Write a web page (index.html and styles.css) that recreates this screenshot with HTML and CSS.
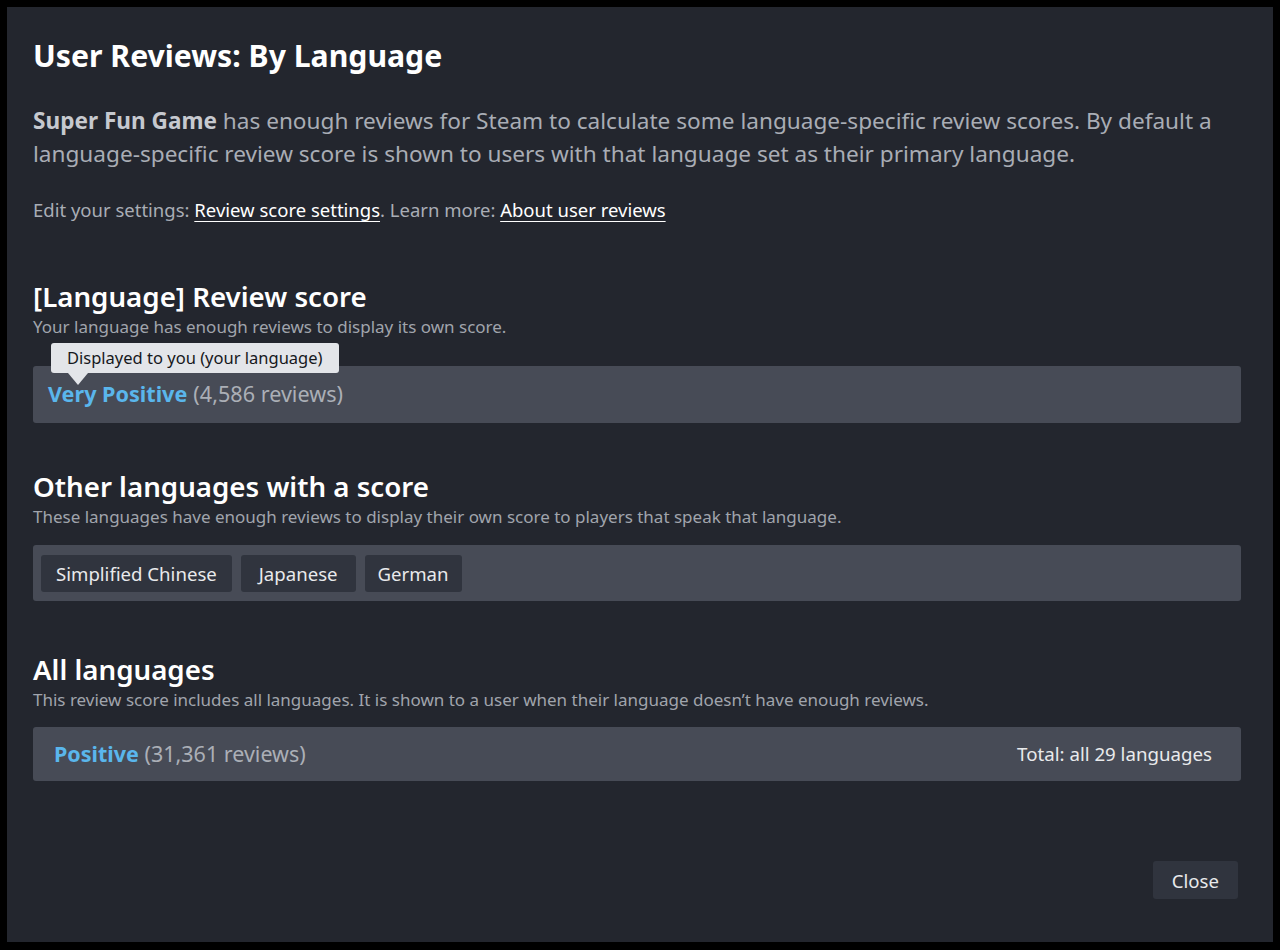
FILE: index.html
```html
<!DOCTYPE html>
<html>
<head>
<meta charset="utf-8">
<link rel="stylesheet" href="styles.css">
</head>
<body>
<div class="dialog">
  <h1 class="title">User Reviews: By Language</h1>
  <p class="intro"><b>Super Fun Game</b> has enough reviews for Steam to calculate some language-specific review scores. By default a language-specific review score is shown to users with that language set as their primary language.</p>
  <p class="settings">Edit your settings: <a href="#">Review score settings</a>. Learn more: <a href="#">About user reviews</a></p>

  <section class="sec sec-1">
    <h2 class="sec-title">[Language] Review score</h2>
    <p class="sec-sub">Your language has enough reviews to display its own score.</p>
    <div class="box box-score">
      <div class="tooltip">Displayed to you (your language)</div>
      <span class="score">Very Positive</span> <span class="count">(4,586 reviews)</span>
    </div>
  </section>

  <section class="sec sec-2">
    <h2 class="sec-title">Other languages with a score</h2>
    <p class="sec-sub">These languages have enough reviews to display their own score to players that speak that language.</p>
    <div class="box box-chips">
      <span class="chip">Simplified Chinese</span>
      <span class="chip chip-wide">Japanese</span>
      <span class="chip chip-narrow">German</span>
    </div>
  </section>

  <section class="sec sec-3">
    <h2 class="sec-title">All languages</h2>
    <p class="sec-sub">This review score includes all languages. It is shown to a user when their language doesn’t have enough reviews.</p>
    <div class="box box-all">
      <div><span class="score">Positive</span> <span class="count">(31,361 reviews)</span></div>
      <div class="total">Total: all 29 languages</div>
    </div>
  </section>

  <div class="footer">
    <button class="close">Close</button>
  </div>
</div>
</body>
</html>
```

FILE: styles.css
```css
* { box-sizing: border-box; }
html, body { margin: 0; padding: 0; }
body {
  background: #000;
  width: 1280px;
  height: 950px;
  padding: 7px;
  font-family: "Noto Sans", "Open Sans", sans-serif;
}
.dialog {
  width: 1266px;
  height: 935px;
  background: #23262e;
  padding: 29px 32px 0 26px;
  display: flex;
  flex-direction: column;
}
.title {
  margin: 0;
  font-size: 30.2px;
  line-height: 40px;
  font-weight: 700;
  color: #ffffff;
}
.intro {
  margin: 28px 0 0;
  font-size: 22.6px;
  line-height: 33px;
  color: #a9adb5;
}
.intro b { color: #c6c9cf; font-weight: 700; }
.settings {
  margin: 28px 0 0;
  font-size: 18.5px;
  line-height: 24px;
  color: #a9adb5;
}
.settings a {
  color: #ffffff;
  text-decoration: underline;
  text-underline-offset: 4px;
}
.sec-title {
  margin: 0;
  font-size: 27.7px;
  line-height: 36px;
  font-weight: 600;
  color: #ffffff;
}
.sec-sub {
  margin: 2px 0 0;
  font-size: 17px;
  line-height: 22px;
  color: #a0a4ac;
}
.sec-1 { margin-top: 56px; }
.sec-2 { margin-top: 45px; }
.sec-3 { margin-top: 50px; }
.box {
  background: #474b56;
  border-radius: 3px;
}
.box-score {
  position: relative;
  height: 57px;
  margin-top: 28px;
  padding: 0 15px 3px;
  display: flex;
  align-items: center;
  gap: 6px;
  font-size: 21.6px;
}
.score { color: #5ab6ec; font-weight: 700; }
.count { color: #abafb6; }
.tooltip {
  position: absolute;
  left: 18px;
  top: -23px;
  background: #e3e5e9;
  color: #16181c;
  font-size: 16.5px;
  line-height: 30px;
  padding: 0 16px;
  border-radius: 3px;
}
.tooltip::after {
  content: "";
  position: absolute;
  left: 17px;
  bottom: -12px;
  border-left: 10px solid transparent;
  border-right: 10px solid transparent;
  border-top: 12px solid #e3e5e9;
}
.box-chips {
  margin-top: 17px;
  height: 56px;
  padding: 0 8px;
  display: flex;
  align-items: center;
  gap: 9px;
}
.chip {
  background: #30343e;
  color: #e9eaec;
  font-size: 18.6px;
  height: 37px;
  line-height: 37px;
  padding: 0 15px;
  border-radius: 3px;
}
.chip-wide { padding: 0 18px; }
.chip-narrow { padding: 0 13px; }
.box-all {
  margin-top: 16px;
  height: 54px;
  padding: 0 29px 1px 21px;
  display: flex;
  align-items: center;
  justify-content: space-between;
  font-size: 21.5px;
}
.total { color: #e9eaec; font-size: 18.7px; }
.footer {
  margin-top: auto;
  padding-bottom: 43px;
  display: flex;
  justify-content: flex-end;
  padding-right: 3px;
}
.close {
  background: #30343e;
  color: #e9eaec;
  border: none;
  border-radius: 3px;
  font-family: inherit;
  font-size: 18.6px;
  height: 38px;
  padding: 0 19px;
}
```
